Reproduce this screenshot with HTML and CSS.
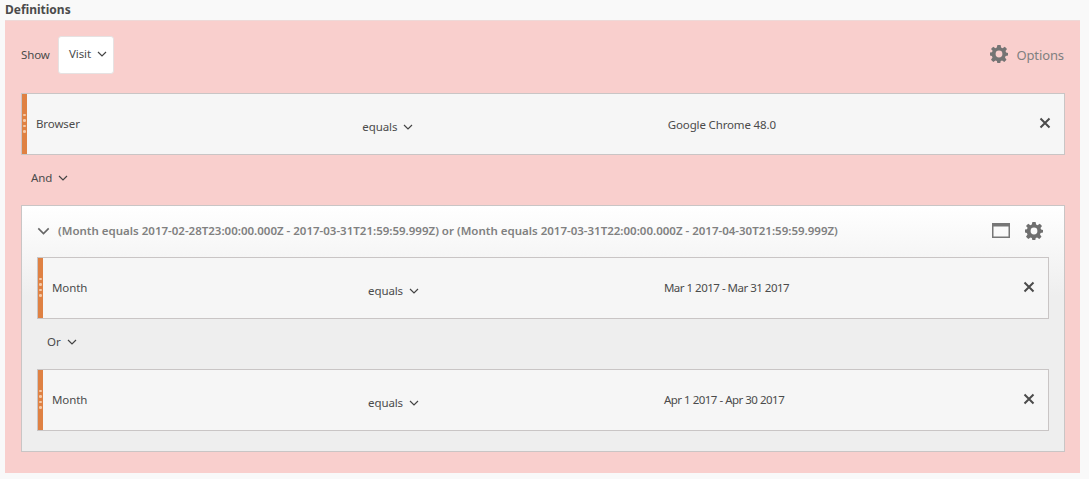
FILE: index.html
```html
<!DOCTYPE html>
<html lang="en">
<head>
<meta charset="utf-8">
<title>Definitions</title>
<link rel="stylesheet" href="styles.css">
</head>
<body>
<svg class="defs" width="0" height="0" aria-hidden="true">
  <defs>
    <symbol id="chev" viewBox="0 0 10 6"><path d="M1 1l4 4 4-4" fill="none" stroke="currentColor" stroke-width="1.2"/></symbol>
    <symbol id="close" viewBox="0 0 12 12"><path d="M1.5 1.5l9 9M10.5 1.5l-9 9" fill="none" stroke="currentColor" stroke-width="2"/></symbol>
    <symbol id="gear" viewBox="0 0 18 18"><path fill-rule="evenodd" fill="currentColor" d="M7.4 0h3.2l.5 2.6 1.4.6L14.8 1.700 17 3.900l-1.500 2.200.6 1.400L18 8v2.600l-2.400.5-.6 1.400 1.500 2.200-2.200 2.200-2.200-1.500-1.400.6-.5 2.500H7.400l-.5-2.500-1.400-.6-2.200 1.500L1 14.700l1.500-2.200-.6-1.400L0 10.600V7.400l2-.2.6-1.400L1 3.900l2.200-2.200 2.200 1.500 1.400-.6zM9 5.600a3.400 3.400 0 1 0 0 6.800 3.400 3.400 0 0 0 0-6.800z"/></symbol>
  </defs>
</svg>
<h1 class="title">Definitions</h1>
<main class="panel">
  <div class="toolbar">
    <span class="show-label">Show</span>
    <div class="select">Visit <svg class="chev"><use href="#chev"/></svg></div>
    <div class="options"><svg class="gear"><use href="#gear"/></svg><span>Options</span></div>
  </div>

  <div class="rule">
    <div class="grip"><i></i><i></i><i></i><i></i></div>
    <span class="rule-name">Browser</span>
    <span class="rule-op">equals <svg class="chev"><use href="#chev"/></svg></span>
    <span class="rule-value">Google Chrome 48.0</span>
    <svg class="close"><use href="#close"/></svg>
  </div>

  <div class="conj">And <svg class="chev"><use href="#chev"/></svg></div>

  <section class="group">
    <header class="group-head">
      <svg class="group-chev"><use href="#chev"/></svg>
      <span class="group-title">(Month equals 2017-02-28T23:00:00.000Z - 2017-03-31T21:59:59.999Z) or (Month equals 2017-03-31T22:00:00.000Z - 2017-04-30T21:59:59.999Z)</span>
      <svg class="window" viewBox="0 0 18 15"><rect x=".75" y=".75" width="16.500" height="13.500" fill="none" stroke="currentColor" stroke-width="1.500"/><rect x="1" y="1" width="16" height="2.500" fill="currentColor"/></svg>
      <svg class="gear-small"><use href="#gear"/></svg>
    </header>

    <div class="rule">
      <div class="grip"><i></i><i></i><i></i><i></i></div>
      <span class="rule-name">Month</span>
      <span class="rule-op">equals <svg class="chev"><use href="#chev"/></svg></span>
      <span class="rule-value rule-date">Mar 1 2017 - Mar 31 2017</span>
      <svg class="close"><use href="#close"/></svg>
    </div>

    <div class="conj">Or <svg class="chev"><use href="#chev"/></svg></div>

    <div class="rule">
      <div class="grip"><i></i><i></i><i></i><i></i></div>
      <span class="rule-name">Month</span>
      <span class="rule-op">equals <svg class="chev"><use href="#chev"/></svg></span>
      <span class="rule-value rule-date">Apr 1 2017 - Apr 30 2017</span>
      <svg class="close"><use href="#close"/></svg>
    </div>
  </section>
</main>
</body>
</html>
```
FILE: styles.css
```css
* { box-sizing: border-box; }
html, body { height: 100%; }
body {
  margin: 0;
  padding: 0 9px 6px 5px;
  background: #f9f9f9;
  color: #4b4b4b;
  font: 11.5px/16px "Noto Sans", "Open Sans", sans-serif;
  letter-spacing: -0.1px;
  overflow: hidden;
}
.defs { position: absolute; }
.title {
  margin: 0;
  height: 20px;
  font-size: 12px;
  line-height: 20px;
  font-weight: 700;
  letter-spacing: 0;
  color: #4b4b4b;
}
.panel {
  height: 453px;
  padding: 15px 15px 0 16px;
  background: #f9cfcd;
  border-top: 1px solid #eed9d8;
}
.toolbar { display: flex; align-items: center; height: 38px; margin-bottom: 19px; }
.show-label { width: 37px; }
.select {
  display: flex;
  align-items: center;
  gap: 6px;
  width: 56px;
  height: 38px;
  padding: 0 0 2px 10px;
  background: #fff;
  border: 1px solid #e6e2e2;
  border-radius: 3px;
}
.chev { width: 10px; height: 6px; color: #444; flex: none; }
.options {
  margin-left: auto;
  margin-right: 1px;
  display: flex;
  align-items: center;
  gap: 8px;
  color: #808080;
  font-size: 13px;
}
.gear { width: 18px; height: 18px; color: #747474; margin-top: -3px; }
.rule {
  display: grid;
  grid-template-columns: 32.15% 30.1% 1fr 20px;
  align-items: center;
  height: 62px;
  padding-left: 14px;
  padding-right: 13px;
  position: relative;
  background: #f6f6f6;
  border: 1px solid #c9c5c5;
}
.grip {
  position: absolute;
  left: 0;
  top: 0;
  bottom: 0;
  width: 5px;
  background: #df8143;
  display: flex;
  flex-direction: column;
  justify-content: center;
  align-items: center;
  gap: 3px;
  padding-bottom: 2px;
}
.grip i { width: 2.500px; height: 2.500px; border-radius: 50%; background: #f6c9a6; }
.rule-name { padding-bottom: 1px; }
.rule-op { display: flex; align-items: center; gap: 6px; padding-top: 6px; }
.rule-value { padding-top: 1px; letter-spacing: -0.15px; }
.rule-date { letter-spacing: -0.5px; padding-top: 0; }
.close { width: 12px; height: 12px; color: #4b4b4b; justify-self: end; margin-top: -2px; }
.conj {
  display: flex;
  align-items: center;
  gap: 6px;
  height: 50px;
  padding: 0 0 4px 10px;
}
.group {
  height: 247px;
  padding: 0 15px;
  border: 1px solid #c9c5c5;
  background: linear-gradient(#ffffff 0, #eeeeee 90px, #eeeeee 100%);
}
.group-head { display: flex; align-items: center; height: 51px; padding-bottom: 2px; }
.group-chev { width: 13px; height: 8px; margin-right: 8px; color: #666; flex: none; }
.group-title { flex: 1; font-weight: 600; color: #808080; letter-spacing: 0; white-space: nowrap; }
.window { width: 18px; height: 15px; color: #777; margin-right: 15px; flex: none; }
.gear-small { width: 18px; height: 18px; color: #6f6f6f; flex: none; margin-right: 6px; }
```
